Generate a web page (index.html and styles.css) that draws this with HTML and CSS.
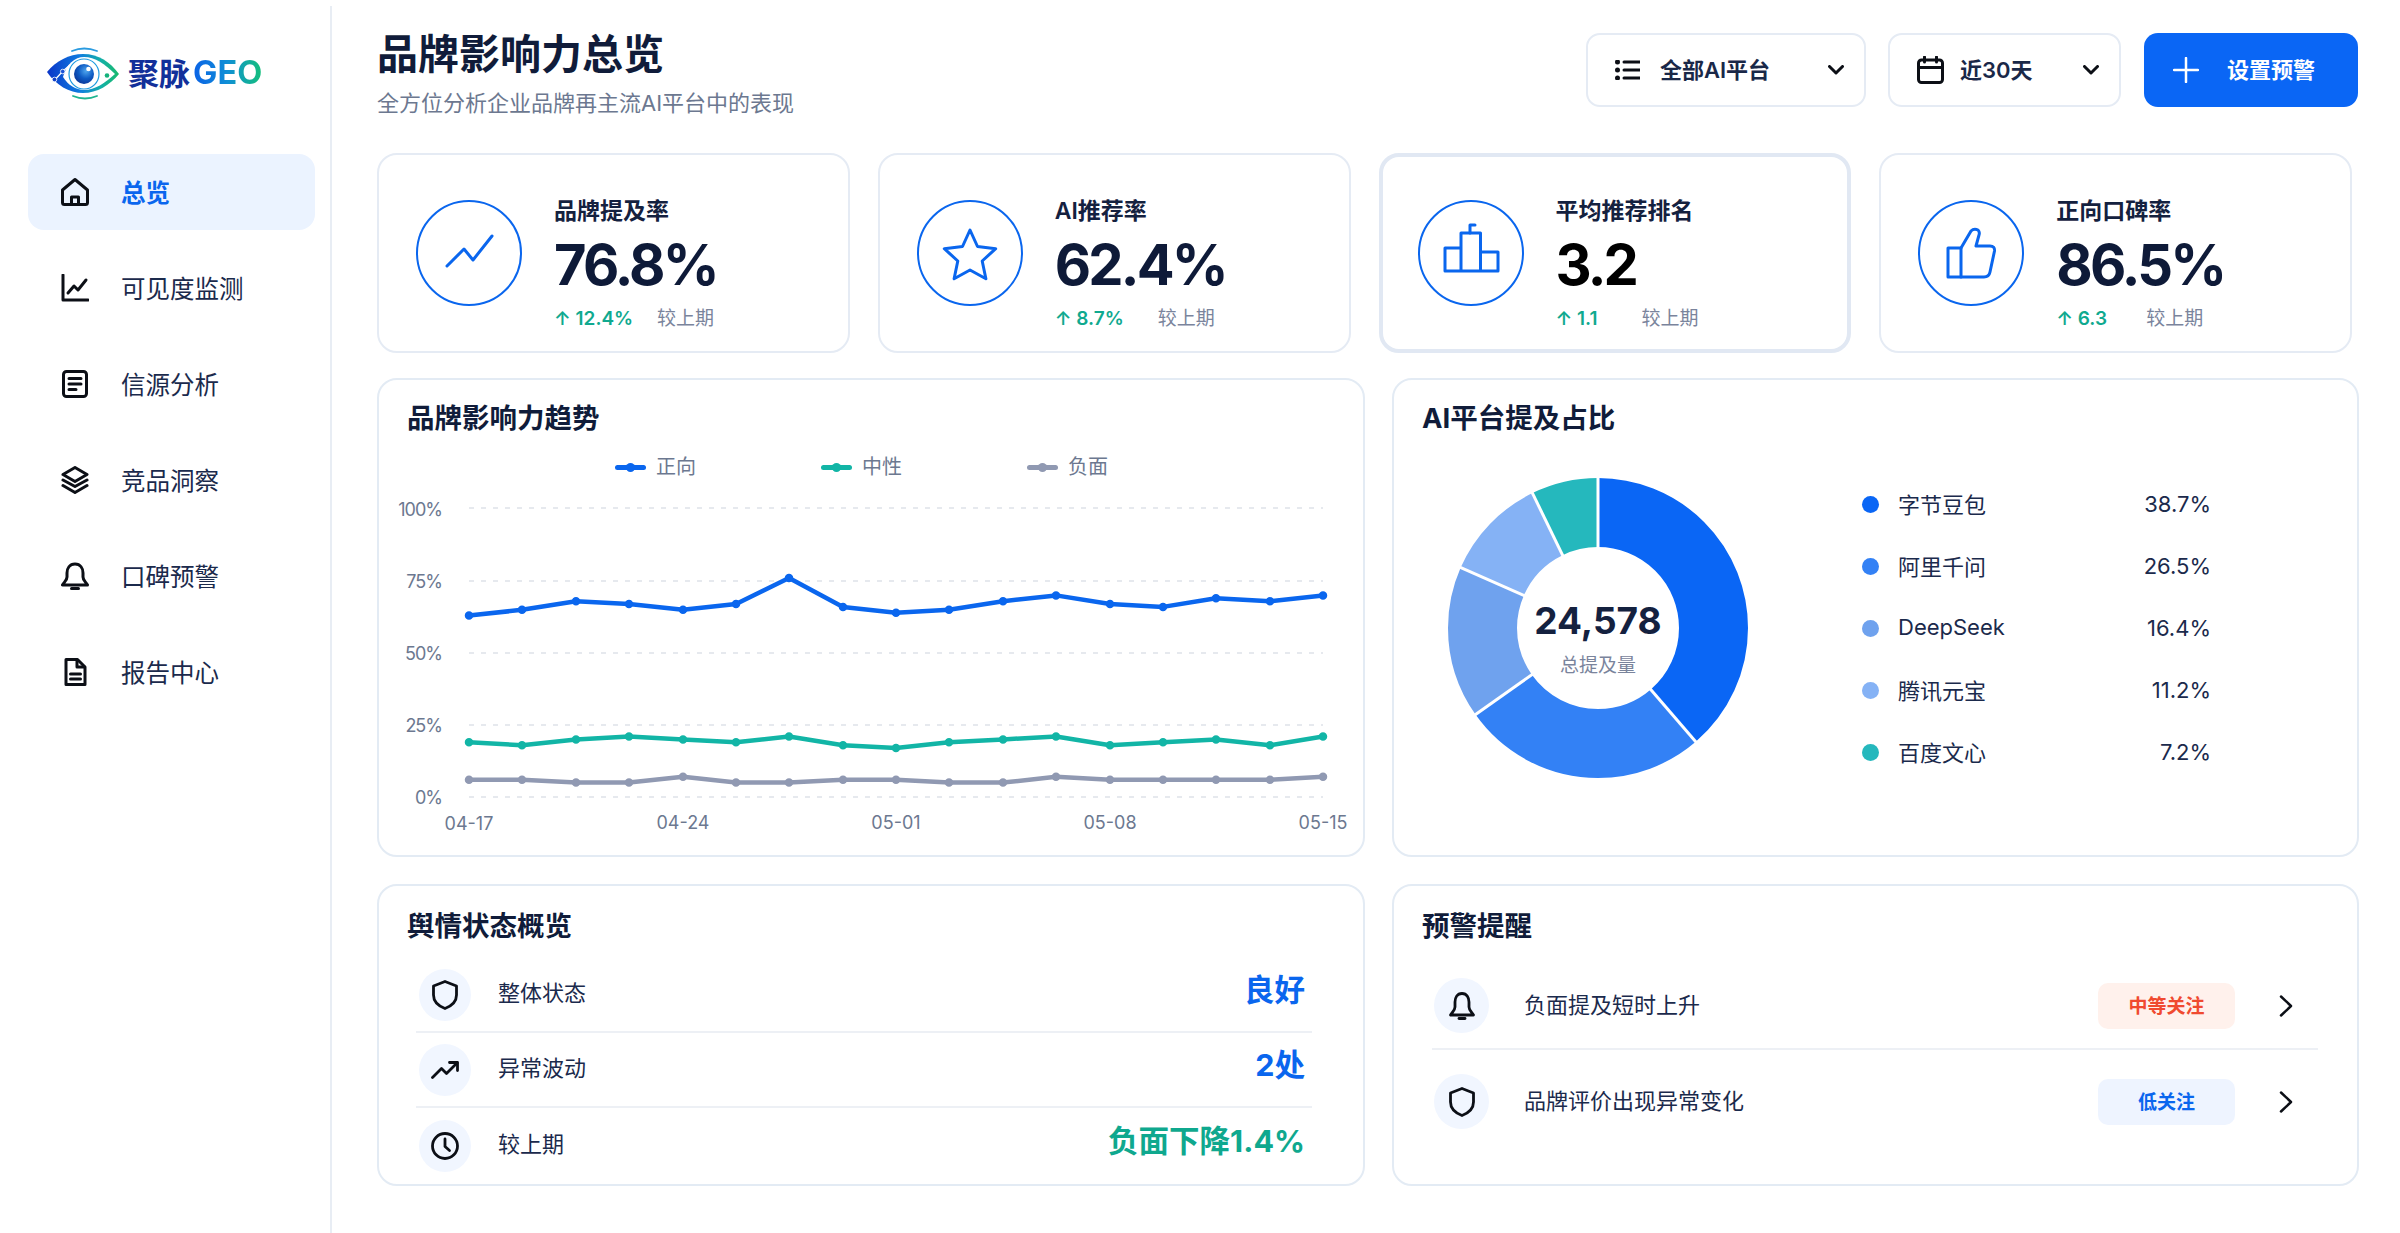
FILE: index.html
```html
<!DOCTYPE html>
<html lang="zh-CN">
<head>
<meta charset="utf-8">
<title>聚脉GEO</title>
<link rel="stylesheet" href="styles.css">
</head>
<body>
<div class="app">
  <aside class="side">
    <div class="logo">
      <svg class="logo-eye" viewBox="0 0 72 53" width="72" height="53">
        <defs>
          <linearGradient id="eyeGrad" x1="0" y1="0" x2="1" y2="0">
            <stop offset="0" stop-color="#0a35c8"/><stop offset=".45" stop-color="#0f7ce0"/><stop offset=".75" stop-color="#14b0a8"/><stop offset="1" stop-color="#18b96a"/>
          </linearGradient>
          <radialGradient id="iris" cx=".6" cy=".35" r=".75">
            <stop offset="0" stop-color="#4fa6ee"/><stop offset=".5" stop-color="#0f5cc4"/><stop offset="1" stop-color="#0a2f8f"/>
          </radialGradient>
        </defs>
        <path d="M25 4Q37 -1 50 4" fill="none" stroke="#2a9be0" stroke-width="1.800" stroke-linecap="round"/>
        <path d="M26 49Q38 54 50 49" fill="none" stroke="#1fb58f" stroke-width="1.800" stroke-linecap="round"/>
        <path d="M0 25C9 14 22 7 36 7C52 7 63 15 72 27C63 38 50 46 36 46C22 46 9 38 0 25Z" fill="url(#eyeGrad)"/>
        <path d="M16 30C19 17 28 10 37 10C48 10 58 17 68 27C58 36 48 43 37 43C29 43 21 38 16 30Z" fill="#fff"/>
        <circle cx="37" cy="27" r="15" fill="none" stroke="#1f9be0" stroke-width="1.200"/>
        <circle cx="37" cy="27" r="10" fill="url(#iris)"/>
        <circle cx="41.500" cy="22" r="2.300" fill="#fff"/>
        <path d="M5 36L15.500 24.500L23 18" fill="none" stroke="#fff" stroke-width="1.300"/>
        <circle cx="7.500" cy="32.500" r="2.300" fill="#1140c8" stroke="#fff" stroke-width=".8"/>
        <circle cx="15.700" cy="24.500" r="2.300" fill="#1d55d8" stroke="#fff" stroke-width=".8"/>
        <circle cx="60" cy="28.500" r="2.300" fill="#16b27c"/>
      </svg>
      <span class="logo-cn">聚脉</span><span class="logo-en">GEO</span>
    </div>
    <nav class="nav">
      <a class="nav-item active">
        <svg class="ic" viewBox="0 0 28 28" width="28" height="28"><path d="M1.500 12L14 1.500L26.500 12V24.500Q26.500 26.500 24.500 26.500H3.500Q1.500 26.500 1.500 24.500Z"/><path d="M10.500 26V19H17.500V26"/></svg>
        <span>总览</span>
      </a>
      <a class="nav-item">
        <svg class="ic" viewBox="0 0 28 28" width="28" height="28"><path d="M2 1V26H27"/><path d="M7 19L13 12L17 16L25 6"/></svg>
        <span>可见度监测</span>
      </a>
      <a class="nav-item">
        <svg class="ic" viewBox="0 0 28 28" width="28" height="28"><rect x="2.500" y="1.500" width="23" height="25" rx="3"/><path d="M8 8.500H20M8 14H20M8 19.500H15"/></svg>
        <span>信源分析</span>
      </a>
      <a class="nav-item">
        <svg class="ic" viewBox="0 0 28 28" width="28" height="28"><path d="M14 1.500L26 8.500L14 15.500L2 8.500Z"/><path d="M2 14L14 20.500L26 14"/><path d="M2 19.500L14 26.500L26 19.500"/></svg>
        <span>竞品洞察</span>
      </a>
      <a class="nav-item">
        <svg class="ic" viewBox="0 0 28 28" width="28" height="28"><path d="M14 2C8.500 2 6 6.500 6 11V15C6 18.500 3 20 1.500 23H26.500C25 20 22 18.500 22 15V11C22 6.500 19.500 2 14 2Z"/><path d="M10.500 26.500H17.500"/></svg>
        <span>口碑预警</span>
      </a>
      <a class="nav-item">
        <svg class="ic" viewBox="0 0 28 28" width="28" height="28"><path d="M5 1.500H16.500L24 9V26.500H5Z"/><path d="M16 2V9H23.500" /><path d="M9.500 16H19.500M9.500 21H19.500"/></svg>
        <span>报告中心</span>
      </a>
    </nav>
  </aside>

  <main class="main">
    <header class="top">
      <div class="heading">
        <h1 class="title">品牌影响力总览</h1>
        <p class="sub">全方位分析企业品牌再主流AI平台中的表现</p>
      </div>
      <div class="tools">
        <div class="select sel-platform">
          <svg class="ic" viewBox="0 0 25 20" width="25" height="20"><path d="M9 2H25M9 10H25M9 18H25"/><path class="dots" d="M2.500 2h0M2.500 10h0M2.500 18h0"/></svg>
          <span>全部AI平台</span>
          <svg class="ic chev" viewBox="0 0 16 10" width="16" height="10"><path d="M1.500 1.500L8 8L14.500 1.500"/></svg>
        </div>
        <div class="select sel-date">
          <svg class="ic" viewBox="0 0 27 28" width="27" height="28"><rect x="1.500" y="4" width="24" height="22.500" rx="3"/><path d="M1.500 11.500H25.500M7.500 1V6M19.500 1V6"/></svg>
          <span>近30天</span>
          <svg class="ic chev" viewBox="0 0 16 10" width="16" height="10"><path d="M1.500 1.500L8 8L14.500 1.500"/></svg>
        </div>
        <div class="cta">
          <svg class="ic-white" viewBox="0 0 26 26" width="26" height="26"><path d="M13 1V25M1 13H25"/></svg>
          <span>设置预警</span>
        </div>
      </div>
    </header>

    <section class="kpis">
      <article class="kpi">
        <div class="kpi-icon"><svg class="ic-blue" viewBox="0 0 106 106" width="106" height="106"><path d="M31 66L48 49L57 60L76 36"/></svg></div>
        <div class="kpi-body">
          <div class="kpi-label">品牌提及率</div>
          <div class="kpi-value">76.8%</div>
          <div class="kpi-foot"><span class="delta d-a">↑ 12.4%</span><span class="prev">较上期</span></div>
        </div>
      </article>
      <article class="kpi">
        <div class="kpi-icon"><svg class="ic-blue" viewBox="0 0 106 106" width="106" height="106"><path d="M53 30L60.500 46.500L78.700 48.700L65.200 61L68.900 78.800L53 70L37.100 78.800L40.800 61L27.300 48.700L45.500 46.500Z"/></svg></div>
        <div class="kpi-body">
          <div class="kpi-label">AI推荐率</div>
          <div class="kpi-value">62.4%</div>
          <div class="kpi-foot"><span class="delta d-a">↑ 8.7%</span><span class="prev">较上期</span></div>
        </div>
      </article>
      <article class="kpi kpi-focus">
        <div class="kpi-icon"><svg class="ic-blue" viewBox="0 0 106 106" width="106" height="106"><path d="M27 48H43V71H27ZM43 33H62.500V71H43ZM62.500 52H80V71H62.500Z"/><path d="M52 33V25H57"/></svg></div>
        <div class="kpi-body">
          <div class="kpi-label">平均推荐排名</div>
          <div class="kpi-value black">3.2</div>
          <div class="kpi-foot"><span class="delta d-c">↑ 1.1</span><span class="prev">较上期</span></div>
        </div>
      </article>
      <article class="kpi">
        <div class="kpi-icon"><svg class="ic-blue" viewBox="0 0 106 106" width="106" height="106"><path d="M30 48H43V77H30Z"/><path d="M43 48L53 31Q56 28 60 30Q62 32 61 35L58 46H72Q77 46 76.500 51L72 72Q71 77 66 77H43"/></svg></div>
        <div class="kpi-body">
          <div class="kpi-label">正向口碑率</div>
          <div class="kpi-value">86.5%</div>
          <div class="kpi-foot"><span class="delta d-d">↑ 6.3</span><span class="prev">较上期</span></div>
        </div>
      </article>
    </section>

    <section class="panels">
      <article class="panel">
        <h2 class="panel-title">品牌影响力趋势</h2>
        <div class="legend">
          <span class="leg"><i class="key key-blue"></i>正向</span>
          <span class="leg"><i class="key key-teal"></i>中性</span>
          <span class="leg"><i class="key key-gray"></i>负面</span>
        </div>
        <svg class="chart" viewBox="379 490 984 360" width="984" height="360">
          <g class="grid">
            <path d="M469 508H1323M469 581H1323M469 653H1323M469 725H1323M469 797H1323"/>
          </g>
          <g class="ylab">
            <text x="442" y="516">100%</text>
            <text x="442" y="588">75%</text>
            <text x="442" y="660">50%</text>
            <text x="442" y="732">25%</text>
            <text x="442" y="804">0%</text>
          </g>
          <g class="xlab">
            <text x="469" y="830">04-17</text>
            <text x="683" y="829">04-24</text>
            <text x="896" y="829">05-01</text>
            <text x="1110" y="829">05-08</text>
            <text x="1323" y="829">05-15</text>
          </g>
          <g class="series s-gray">
            <polyline points="469,779.700 522,779.700 576,782.600 629,782.600 683,776.800 736,782.600 789,782.600 843,779.700 896,779.700 949,782.600 1003,782.600 1056,776.800 1110,779.700 1163,779.700 1216,779.700 1270,779.700 1323,776.800"/>
            <path class="pts" d="M469 779.700h0M522 779.700h0M576 782.600h0M629 782.600h0M683 776.800h0M736 782.600h0M789 782.600h0M843 779.700h0M896 779.700h0M949 782.600h0M1003 782.600h0M1056 776.800h0M1110 779.700h0M1163 779.700h0M1216 779.700h0M1270 779.700h0M1323 776.800h0"/>
          </g>
          <g class="series s-teal">
            <polyline points="469,742.300 522,745.200 576,739.400 629,736.500 683,739.400 736,742.300 789,736.500 843,745.200 896,748 949,742.300 1003,739.400 1056,736.500 1110,745.200 1163,742.300 1216,739.400 1270,745.200 1323,736.500"/>
            <path class="pts" d="M469 742.300h0M522 745.200h0M576 739.400h0M629 736.500h0M683 739.400h0M736 742.300h0M789 736.500h0M843 745.200h0M896 748h0M949 742.300h0M1003 739.400h0M1056 736.500h0M1110 745.200h0M1163 742.300h0M1216 739.400h0M1270 745.200h0M1323 736.500h0"/>
          </g>
          <g class="series s-blue">
            <polyline points="469,615.600 522,609.800 576,601.200 629,604 683,609.800 736,604 789,578.100 843,606.900 896,612.700 949,609.800 1003,601.200 1056,595.400 1110,604 1163,606.900 1216,598.300 1270,601.200 1323,595.400"/>
            <path class="pts" d="M469 615.600h0M522 609.800h0M576 601.200h0M629 604h0M683 609.800h0M736 604h0M789 578.100h0M843 606.900h0M896 612.700h0M949 609.800h0M1003 601.200h0M1056 595.400h0M1110 604h0M1163 606.900h0M1216 598.300h0M1270 601.200h0M1323 595.400h0"/>
          </g>
        </svg>
      </article>

      <article class="panel">
        <h2 class="panel-title">AI平台提及占比</h2>
        <div class="share">
          <div class="donut">
            <svg viewBox="-152 -152 304 304" width="304" height="304">
              <g class="rings" transform="rotate(-90)">
                <circle class="r1" r="115.500" pathLength="100"/>
                <circle class="r2" r="115.500" pathLength="100"/>
                <circle class="r3" r="115.500" pathLength="100"/>
                <circle class="r4" r="115.500" pathLength="100"/>
                <circle class="r5" r="115.500" pathLength="100"/>
              </g>
              <g class="seams">
                <path d="M0 -78V-153"/>
                <path d="M50.800 59.200L99.700 116"/>
                <path d="M-63.700 45L-124.900 88.300"/>
                <path d="M-71.400 -31.400L-140 -61.600"/>
                <path d="M-34.100 -70.200L-66.900 -137.600"/>
              </g>
            </svg>
            <div class="donut-center">
              <strong>24,578</strong>
              <span>总提及量</span>
            </div>
          </div>
          <ul class="shares">
            <li><i class="dot c1"></i><span>字节豆包</span><b>38.7%</b></li>
            <li><i class="dot c2"></i><span>阿里千问</span><b>26.5%</b></li>
            <li><i class="dot c3"></i><span>DeepSeek</span><b>16.4%</b></li>
            <li><i class="dot c4"></i><span>腾讯元宝</span><b>11.2%</b></li>
            <li><i class="dot c5"></i><span>百度文心</span><b>7.2%</b></li>
          </ul>
        </div>
      </article>

      <article class="panel panel-low">
        <h2 class="panel-title">舆情状态概览</h2>
        <ul class="status">
          <li>
            <span class="badge"><svg class="ic ic-thin" viewBox="0 0 26 30" width="26" height="30"><path d="M13 1.500L24.500 6V15C24.500 22 19.500 26 13 28.500C6.500 26 1.500 22 1.500 15V6Z"/></svg></span>
            <span class="status-name">整体状态</span>
            <b class="val blue">良好</b>
          </li>
          <li>
            <span class="badge"><svg class="ic ic-thin" viewBox="0 0 28 18" width="28" height="18"><path d="M1.500 16.500L10.500 7.500L15.500 12.500L26 2"/><path d="M18.500 1.500H26.500V9.500"/></svg></span>
            <span class="status-name">异常波动</span>
            <b class="val blue">2处</b>
          </li>
          <li>
            <span class="badge"><svg class="ic ic-thin" viewBox="0 0 28 28" width="28" height="28"><circle cx="14" cy="14" r="12.500"/><path d="M14 7V14.500L18.500 18.500"/></svg></span>
            <span class="status-name">较上期</span>
            <b class="val green">负面下降1.4%</b>
          </li>
        </ul>
      </article>

      <article class="panel panel-low">
        <h2 class="panel-title">预警提醒</h2>
        <ul class="alerts">
          <li>
            <span class="badge badge-lg"><svg class="ic ic-thin" viewBox="0 0 28 28" width="28" height="28"><path d="M14 1.500C9 1.500 7 6 7 10V15C7 18.500 4 20.500 2.500 23H25.500C24 20.500 21 18.500 21 15V10C21 6 19 1.500 14 1.500Z"/><path d="M11 26.500H17"/></svg></span>
            <span class="alert-name">负面提及短时上升</span>
            <span class="tag tag-mid">中等关注</span>
            <svg class="go" viewBox="0 0 14 22" width="14" height="22"><path d="M2 1.500L12 11L2 20.500"/></svg>
          </li>
          <li>
            <span class="badge badge-lg"><svg class="ic ic-thin" viewBox="0 0 26 30" width="26" height="30"><path d="M13 1.500L24.500 6V15C24.500 22 19.500 26 13 28.500C6.500 26 1.500 22 1.500 15V6Z"/></svg></span>
            <span class="alert-name">品牌评价出现异常变化</span>
            <span class="tag tag-low">低关注</span>
            <svg class="go" viewBox="0 0 14 22" width="14" height="22"><path d="M2 1.500L12 11L2 20.500"/></svg>
          </li>
        </ul>
      </article>
    </section>
  </main>
</div>
</body>
</html>
```
FILE: styles.css
```css
* { box-sizing: border-box; }
html, body { margin: 0; padding: 0; }
body {
  width: 2400px;
  height: 1233px;
  overflow: hidden;
  background: #fff;
  color: #14213f;
  font-family: Inter, "Noto Sans CJK SC", sans-serif;
}
h1, h2, p, ul { margin: 0; padding: 0; }
ul { list-style: none; }
i { display: block; font-style: normal; }

.app { display: flex; height: 1233px; }

/* sidebar */
.side {
  width: 332px;
  flex: none;
  margin-top: 6px;
  padding-top: 41px;
  border-right: 2px solid #e8edf4;
}
.logo { display: flex; align-items: center; height: 53px; margin-left: 47px; }
.logo-eye { flex: none; margin-right: 9px; }
.logo-cn { font-size: 31px; font-weight: 700; color: #12309a; line-height: 1; margin-right: 3px; }
.logo-en {
  font-size: 32.500px;
  font-weight: 700;
  line-height: 1;
  background: linear-gradient(90deg, #0b62e6 0%, #0f8fd6 50%, #14c07a 100%);
  -webkit-background-clip: text;
  background-clip: text;
  color: transparent;
}
.nav { display: flex; flex-direction: column; gap: 20px; width: 287px; margin: 54px 0 0 28px; }
.nav-item {
  display: flex;
  align-items: center;
  gap: 32px;
  height: 76px;
  padding-left: 33px;
  border-radius: 16px;
  font-size: 24.500px;
  color: #1b2a4c;
}
.nav-item span { margin-top: -2px; }
.nav-item.active { background: #ebf3ff; color: #0a66ee; font-weight: 700; }

/* icon strokes */
.ic, .ic-white, .ic-blue, .go { flex: none; display: block; fill: none; stroke-linecap: round; stroke-linejoin: round; }
.ic { stroke: #0c0f16; stroke-width: 3; }
.ic-thin { stroke-width: 2.800; }
.ic .dots { stroke-width: 5; }
.ic-white { stroke: #fff; stroke-width: 2.500; }
.ic-blue { stroke: #0a66ee; stroke-width: 3; }
.go { stroke: #0c0f16; stroke-width: 2.500; }

/* main */
.main { flex: 1; min-width: 0; padding: 33px 41px 0 45px; }
.top { display: flex; justify-content: space-between; height: 74px; }
.title { font-size: 41px; line-height: 42px; font-weight: 700; color: #101c3a; }
.sub { margin-top: 14px; font-size: 22px; line-height: 28px; color: #6c7890; }
.tools { display: flex; gap: 22px; margin-right: 1px; }
.select {
  display: flex;
  align-items: center;
  height: 74px;
  padding: 0 20px 0 27px;
  background: #fff;
  border: 2px solid #e5ebf4;
  border-radius: 14px;
  font-size: 22px;
  font-weight: 600;
  color: #1a2848;
}
.select span, .cta span { margin-top: -4px; }
.sel-platform { width: 280px; gap: 20px; }
.sel-date { width: 233px; gap: 16px; margin-right: 1px; }
.chev { margin-left: auto; }
.cta {
  display: flex;
  align-items: center;
  gap: 28px;
  width: 214px;
  height: 74px;
  padding-left: 29px;
  background: #0a66f5;
  border-radius: 14px;
  color: #fff;
  font-size: 22px;
  font-weight: 600;
}

/* KPI */
.kpis {
  display: grid;
  grid-template-columns: repeat(4, 1fr);
  gap: 28px;
  width: 1975px;
  margin-top: 46px;
}
.kpi {
  display: flex;
  align-items: center;
  gap: 32px;
  height: 200px;
  padding-left: 37px;
  background: #fff;
  border: 2px solid #e5ebf4;
  border-radius: 20px;
}
.kpi-focus { border: 4px solid #e1e8f3; padding-left: 35px; }
.kpi-icon {
  flex: none;
  width: 106px;
  height: 106px;
  border: 2px solid #0a66ee;
  border-radius: 50%;
  position: relative;
}
.kpi-icon svg { position: absolute; left: -2px; top: -2px; }
.kpi-body { align-self: flex-start; padding-top: 40px; }
.kpi-focus .kpi-body { padding-top: 38px; }
.kpi-label { font-size: 23px; line-height: 32px; font-weight: 600; color: #14213f; }
.kpi-value { font-size: 56px; line-height: 76px; font-weight: 700; letter-spacing: -2.800px; color: #0e1a38; }
.kpi-value.black { color: #000; }
.kpi-foot { display: flex; font-size: 19px; line-height: 32px; }
.delta { font-weight: 600; color: #10a98f; white-space: nowrap; }
.d-a { width: 103px; }
.d-c { width: 86px; }
.d-d { width: 90px; }
.prev { color: #7a849c; }

/* panels */
.panels {
  display: grid;
  grid-template-columns: 988px 967px;
  grid-template-rows: 479px 302px;
  gap: 27px;
  margin-top: 25px;
}
.panel {
  background: #fff;
  border: 2px solid #e3ebf4;
  border-radius: 20px;
  overflow: hidden;
}
.panel-title {
  margin: 20px 0 0 28px;
  font-size: 27.500px;
  line-height: 36px;
  font-weight: 700;
  color: #101c3a;
}
.panel-low .panel-title { margin-top: 22px; }

/* trend */
.legend { display: flex; height: 26px; margin-top: 18px; padding-left: 236px; }
.leg {
  display: flex;
  align-items: center;
  gap: 10px;
  width: 206px;
  font-size: 20px;
  line-height: 26px;
  color: #6c7890;
}
.key { position: relative; width: 31px; height: 5px; border-radius: 3px; }
.key::after {
  content: "";
  position: absolute;
  left: 11px;
  top: -2px;
  width: 9px;
  height: 9px;
  border-radius: 50%;
  background: inherit;
}
.key-blue { background: #0a66ee; }
.key-teal { background: #12b5a6; }
.key-gray { background: #9099b2; }
.chart { display: block; margin-top: 10px; }
.grid path { fill: none; stroke: #e6e9ee; stroke-width: 2; stroke-dasharray: 5 7; }
.ylab text, .xlab text { font-size: 18px; fill: #6c7890; }
.ylab text { text-anchor: end; letter-spacing: -1px; }
.xlab text { text-anchor: middle; }
.series polyline { fill: none; stroke-width: 4.500; stroke-linejoin: round; }
.series .pts { fill: none; stroke-width: 8.500; stroke-linecap: round; }
.s-blue polyline, .s-blue .pts { stroke: #0a66ee; }
.s-teal polyline, .s-teal .pts { stroke: #12b5a6; }
.s-gray polyline, .s-gray .pts { stroke: #9099b2; }

/* donut */
.share { display: flex; align-items: center; margin-top: 37px; padding-left: 52px; }
.donut { position: relative; flex: none; width: 304px; height: 304px; }
.donut svg { display: block; }
.rings circle { fill: none; stroke-width: 69; }
.r1 { stroke: #0a66f5; stroke-dasharray: 38.7 61.3; }
.r2 { stroke: #3381f5; stroke-dasharray: 26.5 73.5; stroke-dashoffset: -38.7; }
.r3 { stroke: #6fa2ee; stroke-dasharray: 16.4 83.6; stroke-dashoffset: -65.2; }
.r4 { stroke: #85b2f5; stroke-dasharray: 11.2 88.8; stroke-dashoffset: -81.6; }
.r5 { stroke: #25b8bd; stroke-dasharray: 7.2 92.8; stroke-dashoffset: -92.8; }
.seams path { stroke: #fff; stroke-width: 3; fill: none; }
.donut-center {
  position: absolute;
  inset: 0;
  display: flex;
  flex-direction: column;
  align-items: center;
  padding-top: 123px;
}
.donut-center strong { font-size: 37px; line-height: 44px; font-weight: 700; color: #14213f; }
.donut-center span { margin-top: 10px; font-size: 19px; line-height: 26px; color: #7a849c; }
.shares { width: 349px; margin-left: 112px; }
.shares li { display: flex; align-items: center; height: 62px; font-size: 22px; color: #1b2a4c; }
.dot { width: 17px; height: 17px; border-radius: 50%; margin-right: 19px; }
.c1 { background: #0a66f5; }
.c2 { background: #3381f5; }
.c3 { background: #6fa2ee; }
.c4 { background: #85b2f5; }
.c5 { background: #25b8bd; }
.shares b { margin-left: auto; font-weight: 400; }
.shares span { margin-top: -3px; }

/* status */
.badge {
  flex: none;
  display: flex;
  align-items: center;
  justify-content: center;
  width: 52px;
  height: 52px;
  border-radius: 50%;
  background: #f1f6ff;
}
.badge-lg { width: 55px; height: 55px; }
.status { width: 896px; margin: 14px 0 0 37px; }
.status li {
  display: flex;
  align-items: center;
  height: 75px;
  padding: 0 7px 0 3px;
  border-bottom: 2px solid #edf0f5;
}
.status li:last-child { border-bottom: 0; }
.status-name { margin: -8px 0 0 27px; font-size: 22px; color: #1b2a4c; }
.val { margin: -10px 0 0 auto; font-size: 30.500px; line-height: 40px; font-weight: 700; }
.blue { color: #0a66ee; }
.green { color: #0fa88e; }

/* alerts */
.alerts { width: 886px; margin: 34px 0 0 38px; }
.alerts li { display: flex; align-items: center; padding: 0 25px 0 2px; }
.alerts li:first-child { padding-bottom: 15px; border-bottom: 2px solid #edf0f5; }
.alerts li + li { padding-top: 24px; }
.alert-name { margin: -6px 0 0 35px; font-size: 22px; color: #1b2a4c; }
.tag {
  width: 137px;
  height: 46px;
  margin-left: auto;
  border-radius: 10px;
  font-size: 19px;
  font-weight: 600;
  line-height: 47px;
  text-align: center;
}
.tag-mid { background: #fff1ec; color: #f04a30; }
.tag-low { background: #eef4ff; color: #0a66ee; }
.go { margin-left: 44px; }
```
